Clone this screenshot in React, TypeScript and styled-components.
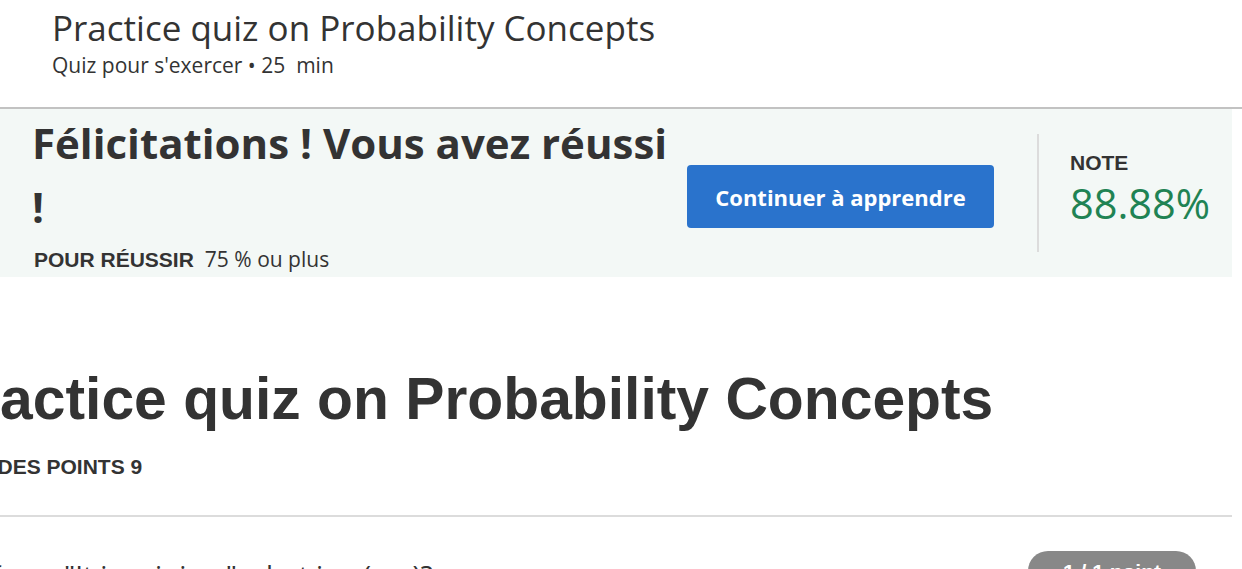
import React from "react";
import styled, { createGlobalStyle } from "styled-components";

const GlobalStyle = createGlobalStyle`
  body {
    margin: 0;
    overflow: hidden;
    background: #fff;
    font-family: "Open Sans", "Liberation Sans", sans-serif;
    color: #333;
  }
`;

const Page = styled.div`
  width: 1242px;
`;

const Header = styled.header`
  padding: 4px 0 0 52px;
  box-sizing: border-box;
  height: 109px;
  border-bottom: 2px solid #c2c2c2;
`;

const Title = styled.h1`
  margin: 0;
  font-size: 35px;
  font-weight: 400;
  line-height: 48px;
  color: #333;
`;

const Subtitle = styled.div`
  font-size: 21px;
  line-height: 26px;
  color: #333;
`;

const Banner = styled.section`
  display: flex;
  align-items: center;
  height: 168px;
  margin-right: 10px;
  background: #f3f8f6;
`;

const Result = styled.div`
  width: 687px;
  padding: 2px 8px 0 32px;
  box-sizing: border-box;
  align-self: flex-start;
`;

const Congrats = styled.h2`
  margin: 0;
  font-size: 42px;
  font-weight: 700;
  line-height: 64px;
  color: #333;
`;

const PassLine = styled.div`
  margin: 7px 0 0 2px;
  font-size: 21px;
  line-height: 26px;
`;

const Label = styled.span`
  font-family: "Liberation Sans", Arial, sans-serif;
  font-weight: 700;
  font-size: 21px;
  line-height: 22px;
  margin-right: 11px;
  color: #333;
`;

const Button = styled.button`
  width: 307px;
  height: 63px;
  margin-top: 7px;
  border: none;
  border-radius: 4px;
  background: #2a73cc;
  color: #fff;
  font-family: "Open Sans", sans-serif;
  font-size: 22px;
  font-weight: 700;
  cursor: pointer;
`;

const Divider = styled.div`
  width: 2px;
  height: 118px;
  margin: 0 31px 0 43px;
  background: #dcdcdc;
`;

const Score = styled.div`
  display: flex;
  flex-direction: column;
  gap: 6px;
  margin-top: -8px;
`;

const ScoreValue = styled.div`
  font-size: 41.5px;
  line-height: 46px;
  color: #1f8354;
`;

const Main = styled.main`
  margin: 0 10px 0 0;
`;

const QuizBody = styled.div`
  margin-left: -62px;
  padding-top: 88px;
  padding-bottom: 36px;
`;

const QuizTitle = styled.h1`
  margin: 0;
  font-family: "Liberation Sans", Arial, sans-serif;
  font-size: 58.8px;
  font-weight: 700;
  line-height: 68px;
  color: #333;
`;

const Points = styled.div`
  margin: 22px 0 0 -14px;
  font-family: "Liberation Sans", Arial, sans-serif;
  font-size: 21px;
  font-weight: 700;
  color: #333;
`;

const Question = styled.div`
  display: flex;
  align-items: flex-start;
  justify-content: space-between;
  border-top: 2px solid #dcdcdc;
  padding-top: 34px;
`;

const QuestionText = styled.div`
  margin-left: -17px;
  margin-top: 5px;
  font-family: "Open Sans", sans-serif;
  font-size: 28px;
  color: #333;
  white-space: nowrap;
`;

const MathVar = styled.span`
  font-family: "Liberation Serif", serif;
  font-style: italic;
  font-size: 30px;
  margin: 0 2px;
`;

const Pill = styled.div`
  width: 168px;
  height: 42px;
  margin-right: 36px;
  border-radius: 20px;
  background: #888;
  color: #fff;
  font-family: "Liberation Sans", Arial, sans-serif;
  font-weight: 700;
  font-size: 21px;
  line-height: 42px;
  text-align: center;
`;

export default function App() {
  return (
    <Page>
      <GlobalStyle />
      <Header>
        <Title>Practice quiz on Probability Concepts</Title>
        <Subtitle>Quiz pour s'exercer • 25&nbsp; min</Subtitle>
      </Header>
      <Banner>
        <Result>
          <Congrats>
            Félicitations ! Vous avez réussi
            <br />!
          </Congrats>
          <PassLine>
            <Label>POUR RÉUSSIR</Label>75 % ou plus
          </PassLine>
        </Result>
        <Button>Continuer à apprendre</Button>
        <Divider />
        <Score>
          <Label>NOTE</Label>
          <ScoreValue>88.88%</ScoreValue>
        </Score>
      </Banner>
      <Main>
        <QuizBody>
          <QuizTitle>Practice quiz on Probability Concepts</QuizTitle>
          <Points>TOTAL DES POINTS 9</Points>
        </QuizBody>
        <Question>
          <QuestionText>
            If m = "It is raining," what is <MathVar>p</MathVar>(¬<MathVar>m</MathVar>)?
          </QuestionText>
          <Pill>1 / 1 point</Pill>
        </Question>
      </Main>
    </Page>
  );
}
